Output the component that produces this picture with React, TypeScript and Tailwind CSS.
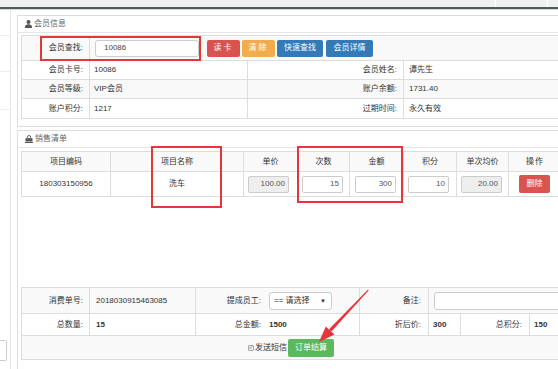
import React from "react";

const FONT = "font-['Liberation_Sans','Noto_Sans_CJK_SC',sans-serif]";

const PersonIcon = () => (
  <svg width="7" height="8" viewBox="0 0 7 8" className="fill-[#555]">
    <circle cx="3.5" cy="2" r="2" />
    <path d="M0 8 C0 5 1.5 4.3 3.5 4.3 C5.5 4.3 7 5 7 8 Z" />
  </svg>
);

const BagIcon = () => (
  <svg width="8" height="8" viewBox="0 0 8 8">
    <path d="M2.3 3.2 V2.2 a1.7 1.7 0 0 1 3.4 0 V3.2" fill="none" stroke="#555" strokeWidth="0.9" />
    <rect x="0.5" y="3.2" width="7" height="3.3" fill="#555" />
    <rect x="0" y="7" width="8" height="1" fill="#555" />
  </svg>
);

const Box = ({ value, disabled }: { value: string; disabled?: boolean }) => (
  <div
    className={
      disabled
        ? "w-[41px] h-[17px] shrink-0 border border-[#ccc] rounded-[2px] bg-[#eeeeee] flex items-center justify-end pr-[3px] text-[#555]"
        : "w-[41px] h-[17px] shrink-0 border border-[#ccc] rounded-[2px] bg-white flex items-center justify-end pr-[3px] text-[#555]"
    }
  >
    {value}
  </div>
);

const Panel = ({
  title,
  icon,
  children,
  className = "",
}: {
  title: string;
  icon: React.ReactNode;
  children: React.ReactNode;
  className?: string;
}) => (
  <div className={`border border-[#ddd] w-[700px] shrink-0 ${className}`}>
    <div className="h-[17px] border-b border-[#e5e5e5] flex items-center gap-[2px] pl-[7px] text-[#666]">
      {icon}
      <span>{title}</span>
    </div>
    {children}
  </div>
);

const MemberInfo = () => (
  <Panel title="会员信息" icon={<PersonIcon />}>
    <div className="pt-[2px] pl-[3px] pb-[7px]">
      <div className="border border-[#ddd] w-[690px]">
        <div className="flex h-[25px] bg-[#f9f9f9] border-b border-[#ddd]">
          <div className="w-[68px] shrink-0 border-r border-[#ddd] flex items-center justify-end pr-[6px]">会员查找:</div>
          <div className="flex items-center pl-[5px]">
            <div className="w-[104px] h-[17px] border border-[#ccc] rounded-[3px] bg-white flex items-center pl-[8px] text-[#444]">
              10086
            </div>
            <button className="ml-[8px] w-[33px] h-[17px] rounded-[2px] bg-[#d9534f] text-white tracking-[2px]">读卡</button>
            <button className="ml-[2px] w-[33px] h-[17px] rounded-[2px] bg-[#f0ad4e] text-white tracking-[2px]">清除</button>
            <button className="ml-[2px] w-[46px] h-[17px] rounded-[2px] bg-[#337ab7] text-white">快速查找</button>
            <button className="ml-[3px] w-[47px] h-[17px] rounded-[2px] bg-[#337ab7] text-white">会员详情</button>
          </div>
        </div>
        {[
          ["会员卡号:", "10086", "会员姓名:", "谭先生", "bg-white"],
          ["会员等级:", "VIP会员", "账户余额:", "1731.40", "bg-[#f9f9f9]"],
          ["账户积分:", "1217", "过期时间:", "永久有效", "bg-white"],
        ].map(([l1, v1, l2, v2, bg], i) => (
          <div key={l1} className={`flex h-[19px] ${bg} ${i < 2 ? "border-b border-[#ddd]" : ""}`}>
            <div className="w-[68px] shrink-0 border-r border-[#ddd] flex items-center justify-end pr-[6px]">{l1}</div>
            <div className="w-[158px] shrink-0 border-r border-[#ddd] flex items-center pl-[4px]">{v1}</div>
            <div className="w-[156px] shrink-0 border-r border-[#ddd] flex items-center justify-end pr-[6px]">{l2}</div>
            <div className="flex-1 flex items-center pl-[5px]">{v2}</div>
          </div>
        ))}
      </div>
    </div>
  </Panel>
);

const widths = ["w-[89px]", "w-[133px]", "w-[54px]", "w-[52px]", "w-[54px]", "w-[53px]", "w-[52px]"];

const SalesList = () => (
  <Panel title="销售清单" icon={<BagIcon />} className="mt-[3px] h-[400px]">
    <div className="pt-[3px] pl-[3px]">
      <div className="border border-[#ddd] w-[690px]">
        <div className="flex h-[20px] bg-[#f9f9f9] border-b border-[#ddd]">
          {["项目编码", "项目名称", "单价", "次数", "金额", "积分", "单次均价"].map((h, i) => (
            <div key={h} className={`${widths[i]} shrink-0 border-r border-[#ddd] flex items-center justify-center`}>
              {h}
            </div>
          ))}
          <div className="w-[52px] shrink-0 flex items-center justify-center tracking-[1px]">操作</div>
        </div>
        <div className="flex h-[24px]">
          <div className="w-[89px] shrink-0 border-r border-[#ddd] flex items-center justify-center">180303150956</div>
          <div className="w-[133px] shrink-0 border-r border-[#ddd] flex items-center justify-center">洗车</div>
          <div className="w-[54px] shrink-0 border-r border-[#ddd] flex items-center pl-[4px]"><Box value="100.00" disabled /></div>
          <div className="w-[52px] shrink-0 border-r border-[#ddd] flex items-center pl-[4px]"><Box value="15" /></div>
          <div className="w-[54px] shrink-0 border-r border-[#ddd] flex items-center pl-[5px]"><Box value="300" /></div>
          <div className="w-[53px] shrink-0 border-r border-[#ddd] flex items-center pl-[4px]"><Box value="10" /></div>
          <div className="w-[52px] shrink-0 border-r border-[#ddd] flex items-center pl-[4px]"><Box value="20.00" disabled /></div>
          <div className="flex-1 flex items-center pl-[10px]">
            <button className="w-[31px] h-[18px] rounded-[2px] bg-[#d9534f] text-white">删除</button>
          </div>
        </div>
      </div>

      <div className="mt-[90px] border border-[#ddd] w-[690px]">
        <div className="flex h-[26px] bg-[#f9f9f9] border-b border-[#ddd]">
          <div className="w-[68px] shrink-0 border-r border-[#ddd] flex items-center justify-end pr-[6px]">消费单号:</div>
          <div className="w-[106px] shrink-0 border-r border-[#ddd] flex items-center pl-[6px]">2018030915463085</div>
          <div className="w-[164px] shrink-0 border-r border-[#ddd] flex items-center">
            <div className="w-[69px] shrink-0 text-right pr-[4px]">提成员工:</div>
            <div className="ml-[4px] w-[63px] shrink-0 h-[18px] border border-[#ccc] rounded-[3px] bg-white flex items-center justify-between pl-[4px] pr-[5px]">
              <span>== 请选择</span>
              <span className="text-[6px]">▼</span>
            </div>
          </div>
          <div className="w-[69px] shrink-0 border-r border-[#ddd] flex items-center justify-end pr-[7px]">备注:</div>
          <div className="flex-1 flex items-center pl-[5px]">
            <div className="w-[200px] h-[18px] border border-[#ccc] rounded-[3px] bg-white" />
          </div>
        </div>
        <div className="flex h-[22px] bg-white border-b border-[#ddd] font-bold">
          <div className="w-[68px] shrink-0 border-r border-[#ddd] flex items-center justify-end pr-[6px] font-normal">总数量:</div>
          <div className="w-[106px] shrink-0 border-r border-[#ddd] flex items-center pl-[6px]">15</div>
          <div className="w-[164px] shrink-0 border-r border-[#ddd] flex items-center">
            <div className="w-[69px] shrink-0 text-right pr-[4px] font-normal">总金额:</div>
            <div className="pl-[4px]">1500</div>
          </div>
          <div className="w-[69px] shrink-0 border-r border-[#ddd] flex items-center justify-end pr-[7px] font-normal">折后价:</div>
          <div className="w-[32px] shrink-0 border-r border-[#ddd] flex items-center pl-[4px]">300</div>
          <div className="w-[69px] shrink-0 border-r border-[#ddd] flex items-center justify-end pr-[7px] font-normal">总积分:</div>
          <div className="flex-1 flex items-center pl-[4px]">150</div>
        </div>
        <div className="flex h-[23px] bg-[#f9f9f9] items-center pl-[226px]">
          <span className="w-[6px] h-[6px] border border-[#aaa] bg-[#eee] rounded-[1px] flex items-center justify-center text-[5px] leading-none text-[#666]">✓</span>
          <span className="ml-[1px]">发送短信</span>
          <button className="ml-[1px] w-[46px] h-[18px] rounded-[2px] bg-[#5cb85c] text-white">订单结算</button>
        </div>
      </div>
    </div>
  </Panel>
);

const Sidebar = () => (
  <div className="w-[11px] shrink-0 border-r border-[#e5e5e5] flex flex-col">
    <div className="h-[26px] border-b border-[#eee]" />
    <div className="h-[36px] border-b border-[#eee]" />
    <div className="h-[38px] border-b border-[#eee]" />
    <div className="h-[230px]" />
    <div className="w-[7px] h-[21px] border border-l-0 border-[#ccc] rounded-r-[2px]" />
  </div>
);

export default function App() {
  return (
    <div className={`relative w-[558px] h-[369px] overflow-hidden bg-white text-[8px] leading-none text-[#333] ${FONT}`}>
      <div className="h-[7px] bg-[#f0f0f0] flex">
        <div className="ml-[495px] w-[1px] bg-white" />
        <div className="ml-[51px] w-[1px] bg-white" />
      </div>
      <div className="h-[2px] bg-[#4f5b5b]" />
      <div className="h-[1px] bg-[#d3d9d9]" />
      <div className="flex">
        <Sidebar />
        <div className="pl-[6px] pt-[5px] flex flex-col">
          <MemberInfo />
          <SalesList />
        </div>
      </div>

      {/* annotations */}
      <div className="absolute left-[40px] top-[36px] w-[161px] h-[25px] border-2 border-[#e8353b]" />
      <div className="absolute left-[151px] top-[146px] w-[71px] h-[62px] border-2 border-[#e8353b]" />
      <div className="absolute left-[297px] top-[146px] w-[106px] h-[57px] border-2 border-[#e8353b]" />
      <svg className="absolute left-0 top-0" width="558" height="369">
        <polygon points="368,289.5 368.6,290.5 331.5,331.5 329,329.2" fill="#e8353b" />
        <polygon points="319,342 325.8,326.5 334.5,334.5" fill="#e8353b" />
      </svg>
    </div>
  );
}
